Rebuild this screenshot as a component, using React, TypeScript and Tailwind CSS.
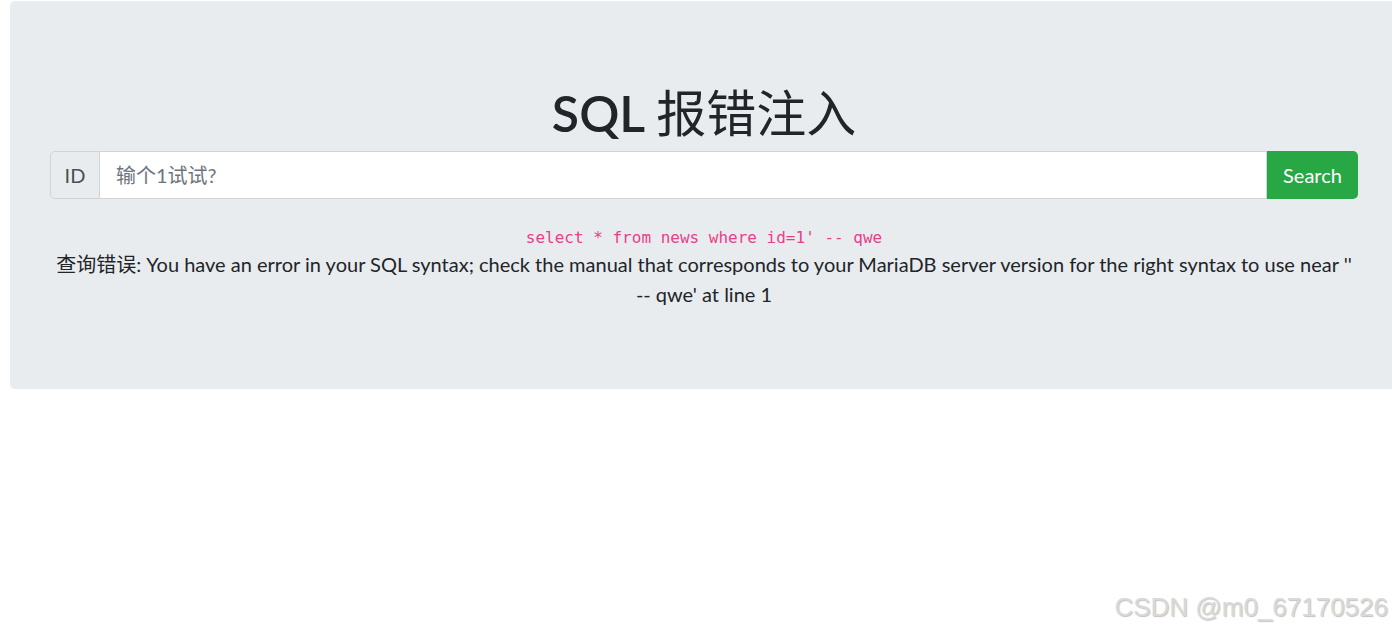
export default function App() {
  return (
    <div
      className="relative h-[631px] w-[1392px] overflow-hidden bg-white text-[#212529]"
      style={{ fontFamily: 'Lato, "Noto Sans CJK SC", sans-serif' }}
    >
      <div className="ml-[10px] mt-px w-[1388px] rounded-[5px] bg-[#e9ecef] px-[40px] pb-[80px] pt-[82px]">
        <h1 className="mb-2 text-center text-[50px] font-semibold leading-[60px]">
          SQL <span className="font-normal">报错注入</span>
        </h1>

        <div className="flex h-[48px] w-full">
          <span className="flex w-[50px] items-center justify-center rounded-l-[5px] border border-[#ced4da] bg-[#e9ecef] text-[20px] text-[#495057]">
            ID
          </span>
          <input
            type="text"
            placeholder="输个1试试?"
            className="min-w-0 flex-1 border border-l-0 border-[#ced4da] bg-white px-4 text-[20px] text-[#495057] outline-none placeholder:text-[#6c757d]"
          />
          <button
            type="button"
            className="w-[91px] rounded-r-[5px] bg-[#28a745] text-[20px] text-white"
          >
            Search
          </button>
        </div>

        <div className="mt-[27px] text-center">
          <code
            className="block text-[16px] leading-[23px] text-[#e83e8c]"
            style={{ fontFamily: '"DejaVu Sans Mono", monospace' }}
          >
            select * from news where id=1' -- qwe
          </code>
          <p className="text-[20px] leading-[30px]">
            查询错误: You have an error in your SQL syntax; check the manual that corresponds to your MariaDB server version for the right syntax to use near '' -- qwe' at line 1
          </p>
        </div>
      </div>

      <div
        className="absolute bottom-[4px] right-[4px] text-[26px] text-[#d9d9d9] [text-shadow:1px_1px_1px_#c4c4c4]"
        style={{ fontFamily: '"Liberation Sans", sans-serif' }}
      >
        CSDN @m0_67170526
      </div>
    </div>
  );
}
